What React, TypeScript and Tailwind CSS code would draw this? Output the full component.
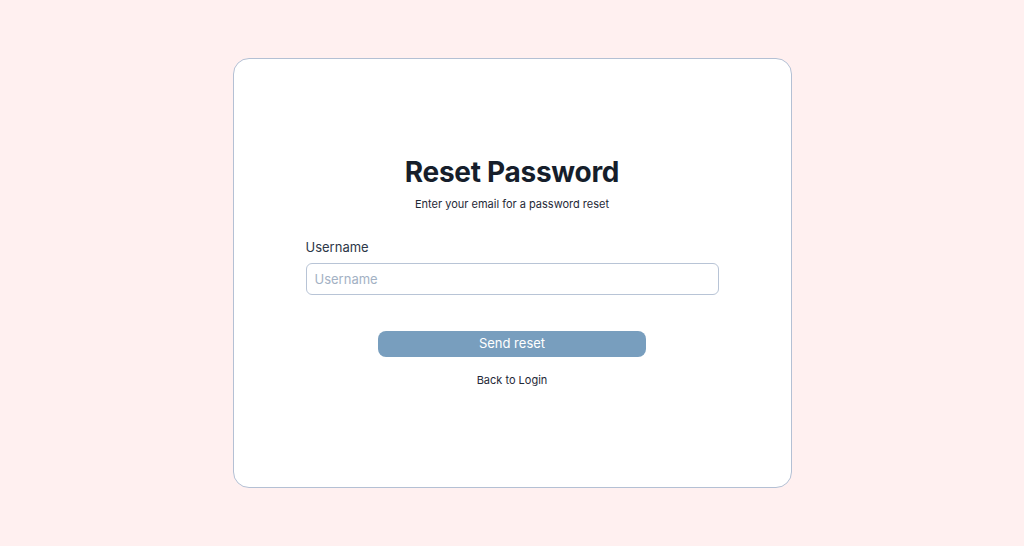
export default function App() {
  return (
    <div className="flex min-h-screen h-[546px] items-center justify-center bg-[#fff0f0] font-['Inter',sans-serif]">
      <div className="flex h-[430px] w-[559px] flex-col items-center rounded-2xl border border-[#b4c0d4] bg-white pt-[95px]">
        <h1 className="text-[28px] leading-9 font-bold tracking-[-0.01em] text-[#161e2b]">Reset Password</h1>
        <p className="mt-1.5 text-[11px] leading-4 text-[#1f2937]">Enter your email for a password reset</p>

        <div className="mt-[25px] w-[413px]">
          <label className="mb-1.5 block text-[13px] leading-5 text-[#2d3748]">Username</label>
          <input
            placeholder="Username"
            className="h-8 w-full rounded-md border border-[#b8c4d6] bg-white px-2 text-[13px] text-[#2d3748] placeholder:text-[#a3b1c4] focus:outline-none"
          />
        </div>

        <button className="mt-9 h-[26px] w-[268px] rounded-lg bg-[#789ebe] text-[13px] text-white">
          Send reset
        </button>
        <a className="mt-[15px] text-[11px] leading-4 text-[#1f2937]">Back to Login</a>
      </div>
    </div>
  );
}
